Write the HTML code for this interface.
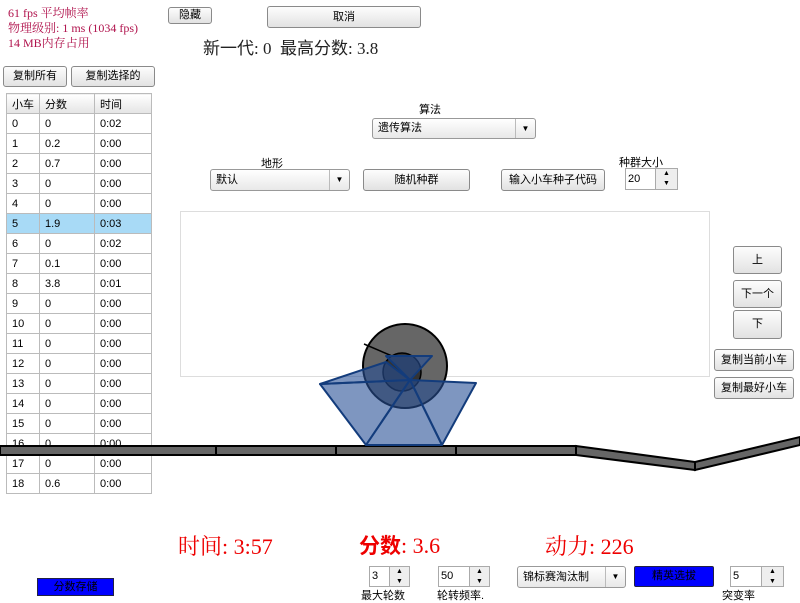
<!DOCTYPE html>
<html><head><meta charset="utf-8"><style>
*{box-sizing:border-box}
body{margin:0;width:800px;height:600px;position:relative;background:#fff;font-family:"Liberation Sans","Noto Sans CJK SC",sans-serif;font-size:11px;overflow:hidden}
.a{position:absolute}
.btn{position:absolute;border:1px solid #8a8a8a;border-radius:3px;background:linear-gradient(#fdfdfd,#e2e2e2);text-align:center;font-size:11px;color:#000}
.sel{position:absolute;border:1px solid #999;border-radius:3px;background:linear-gradient(#fff,#e8e8e8);font-size:11px;padding-left:5px}
.sel .ar{position:absolute;right:0;top:0;bottom:0;width:20px;border-left:1px solid #bbb;text-align:center;font-size:8px}
.spin{position:absolute;border:1px solid #aaa;background:#fff;font-size:11px;padding-left:2px}
.spin .b{position:absolute;right:0;top:0;bottom:0;width:22px;border-left:1px solid #aaa;background:#eee;font-size:7px;text-align:center;line-height:10px}
table{border-collapse:collapse;position:absolute;left:6px;top:93px;font-size:11px}
td{border:1px solid #bbb;height:20px;padding:0 5px}
tr.h td{background:linear-gradient(#fff,#e4e4e4)}
tr.s td{background:#a8daf6}
.red{color:#e00;font-family:"Liberation Serif","Noto Serif CJK SC",serif;font-size:22px}
</style></head><body>
<div class="a" style="left:8px;top:6px;color:#b0124c;font-family:'Liberation Serif','Noto Serif CJK SC',serif;font-size:12px;line-height:15px">61 fps 平均帧率<br>物理级别: 1 ms (1034 fps)<br>14 MB内存占用</div>
<div class="btn" style="left:168px;top:7px;width:44px;height:17px;line-height:15px">隐藏</div>
<div class="btn" style="left:267px;top:6px;width:154px;height:22px;line-height:20px">取消</div>
<div class="a" style="left:203px;top:34px;font-size:17px;color:#222;font-family:'Liberation Serif','Noto Sans CJK SC',serif">新一代: 0&nbsp; 最高分数: 3.8</div>
<div class="btn" style="left:3px;top:66px;width:64px;height:21px;line-height:19px">复制所有</div>
<div class="btn" style="left:71px;top:66px;width:84px;height:21px;line-height:19px">复制选择的</div>
<table>
<tr class="h"><td style="width:33px">小车</td><td style="width:55px">分数</td><td style="width:57px">时间</td></tr>
<tr><td>0</td><td>0</td><td>0:02</td></tr>
<tr><td>1</td><td>0.2</td><td>0:00</td></tr>
<tr><td>2</td><td>0.7</td><td>0:00</td></tr>
<tr><td>3</td><td>0</td><td>0:00</td></tr>
<tr><td>4</td><td>0</td><td>0:00</td></tr>
<tr class="s"><td>5</td><td>1.9</td><td>0:03</td></tr>
<tr><td>6</td><td>0</td><td>0:02</td></tr>
<tr><td>7</td><td>0.1</td><td>0:00</td></tr>
<tr><td>8</td><td>3.8</td><td>0:01</td></tr>
<tr><td>9</td><td>0</td><td>0:00</td></tr>
<tr><td>10</td><td>0</td><td>0:00</td></tr>
<tr><td>11</td><td>0</td><td>0:00</td></tr>
<tr><td>12</td><td>0</td><td>0:00</td></tr>
<tr><td>13</td><td>0</td><td>0:00</td></tr>
<tr><td>14</td><td>0</td><td>0:00</td></tr>
<tr><td>15</td><td>0</td><td>0:00</td></tr>
<tr><td>16</td><td>0</td><td>0:00</td></tr>
<tr><td>17</td><td>0</td><td>0:00</td></tr>
<tr><td>18</td><td>0.6</td><td>0:00</td></tr>
</table>
<div class="a" style="left:419px;top:101px">算法</div>
<div class="sel" style="left:372px;top:118px;width:164px;height:21px;line-height:19px">遗传算法<span class="ar">▼</span></div>
<div class="a" style="left:261px;top:155px">地形</div>
<div class="sel" style="left:210px;top:169px;width:140px;height:22px;line-height:20px">默认<span class="ar">▼</span></div>
<div class="btn" style="left:363px;top:169px;width:107px;height:22px;line-height:20px">随机种群</div>
<div class="btn" style="left:501px;top:169px;width:104px;height:22px;line-height:20px">输入小车种子代码</div>
<div class="a" style="left:619px;top:154px">种群大小</div>
<div class="spin" style="left:625px;top:168px;width:53px;height:22px;line-height:20px">20<span class="b">▲<br>▼</span></div>
<div class="a" style="left:180px;top:211px;width:530px;height:166px;border:1px solid #ddd"></div>
<div class="btn" style="left:733px;top:246px;width:49px;height:28px;line-height:26px">上</div>
<div class="btn" style="left:733px;top:280px;width:49px;height:28px;line-height:26px">下一个</div>
<div class="btn" style="left:733px;top:310px;width:49px;height:29px;line-height:27px">下</div>
<div class="btn" style="left:714px;top:349px;width:80px;height:22px;line-height:20px">复制当前小车</div>
<div class="btn" style="left:714px;top:377px;width:80px;height:22px;line-height:20px">复制最好小车</div>
<svg class="a" style="left:0;top:0" width="800" height="600">
<g stroke="#000" stroke-width="2" fill="#666">
<polygon points="0,446 576,446 576,455 0,455"/>
<line x1="216" y1="446" x2="216" y2="455"/><line x1="336" y1="446" x2="336" y2="455"/><line x1="456" y1="446" x2="456" y2="455"/>
<polygon points="576,446 695,462 695,470 576,455"/>
<polygon points="695,462 800,437 800,445 695,470"/>
<circle cx="405" cy="366" r="42"/>
</g>
<line x1="364" y1="344" x2="392" y2="356" stroke="#000" stroke-width="1.5"/>
<circle cx="402" cy="372" r="19" fill="#333" stroke="#000" stroke-width="1.5"/>
<g fill="rgba(40,80,150,0.6)" stroke="#133c7c" stroke-width="2" stroke-linejoin="round">
<polygon points="320,384 410,380 366,445"/>
<polygon points="410,380 476,383 442,445"/>
<polygon points="366,445 410,380 442,445"/>
<polygon points="386,356 432,356 410,380"/>
<polygon points="320,384 386,362 410,380"/>
</g>
</svg>
<div class="a red" style="left:178px;top:530px">时间: 3:57</div>
<div class="a red" style="left:359px;top:530px"><b style="font-family:'Noto Sans CJK SC',sans-serif;font-size:21px">分数</b>: 3.6</div>
<div class="a red" style="left:545px;top:530px">动力: 226</div>
<div class="a" style="left:37px;top:578px;width:77px;height:18px;background:#00f;border:1px solid #224;text-align:center;line-height:16px;color:#000">分数存储</div>
<div class="spin" style="left:369px;top:566px;width:41px;height:21px;line-height:19px">3<span class="b" style="width:20px">▲<br>▼</span></div>
<div class="a" style="left:361px;top:587px">最大轮数</div>
<div class="spin" style="left:438px;top:566px;width:52px;height:21px;line-height:19px">50<span class="b" style="width:20px">▲<br>▼</span></div>
<div class="a" style="left:437px;top:587px">轮转频率.</div>
<div class="sel" style="left:517px;top:566px;width:109px;height:22px;line-height:20px">锦标赛淘汰制<span class="ar">▼</span></div>
<div class="a" style="left:634px;top:566px;width:80px;height:21px;background:#00f;border:1px solid #224;border-radius:2px;text-align:center;line-height:19px">精英选拔</div>
<div class="spin" style="left:730px;top:566px;width:54px;height:21px;line-height:19px">5<span class="b">▲<br>▼</span></div>
<div class="a" style="left:722px;top:587px">突变率</div>
</body></html>
